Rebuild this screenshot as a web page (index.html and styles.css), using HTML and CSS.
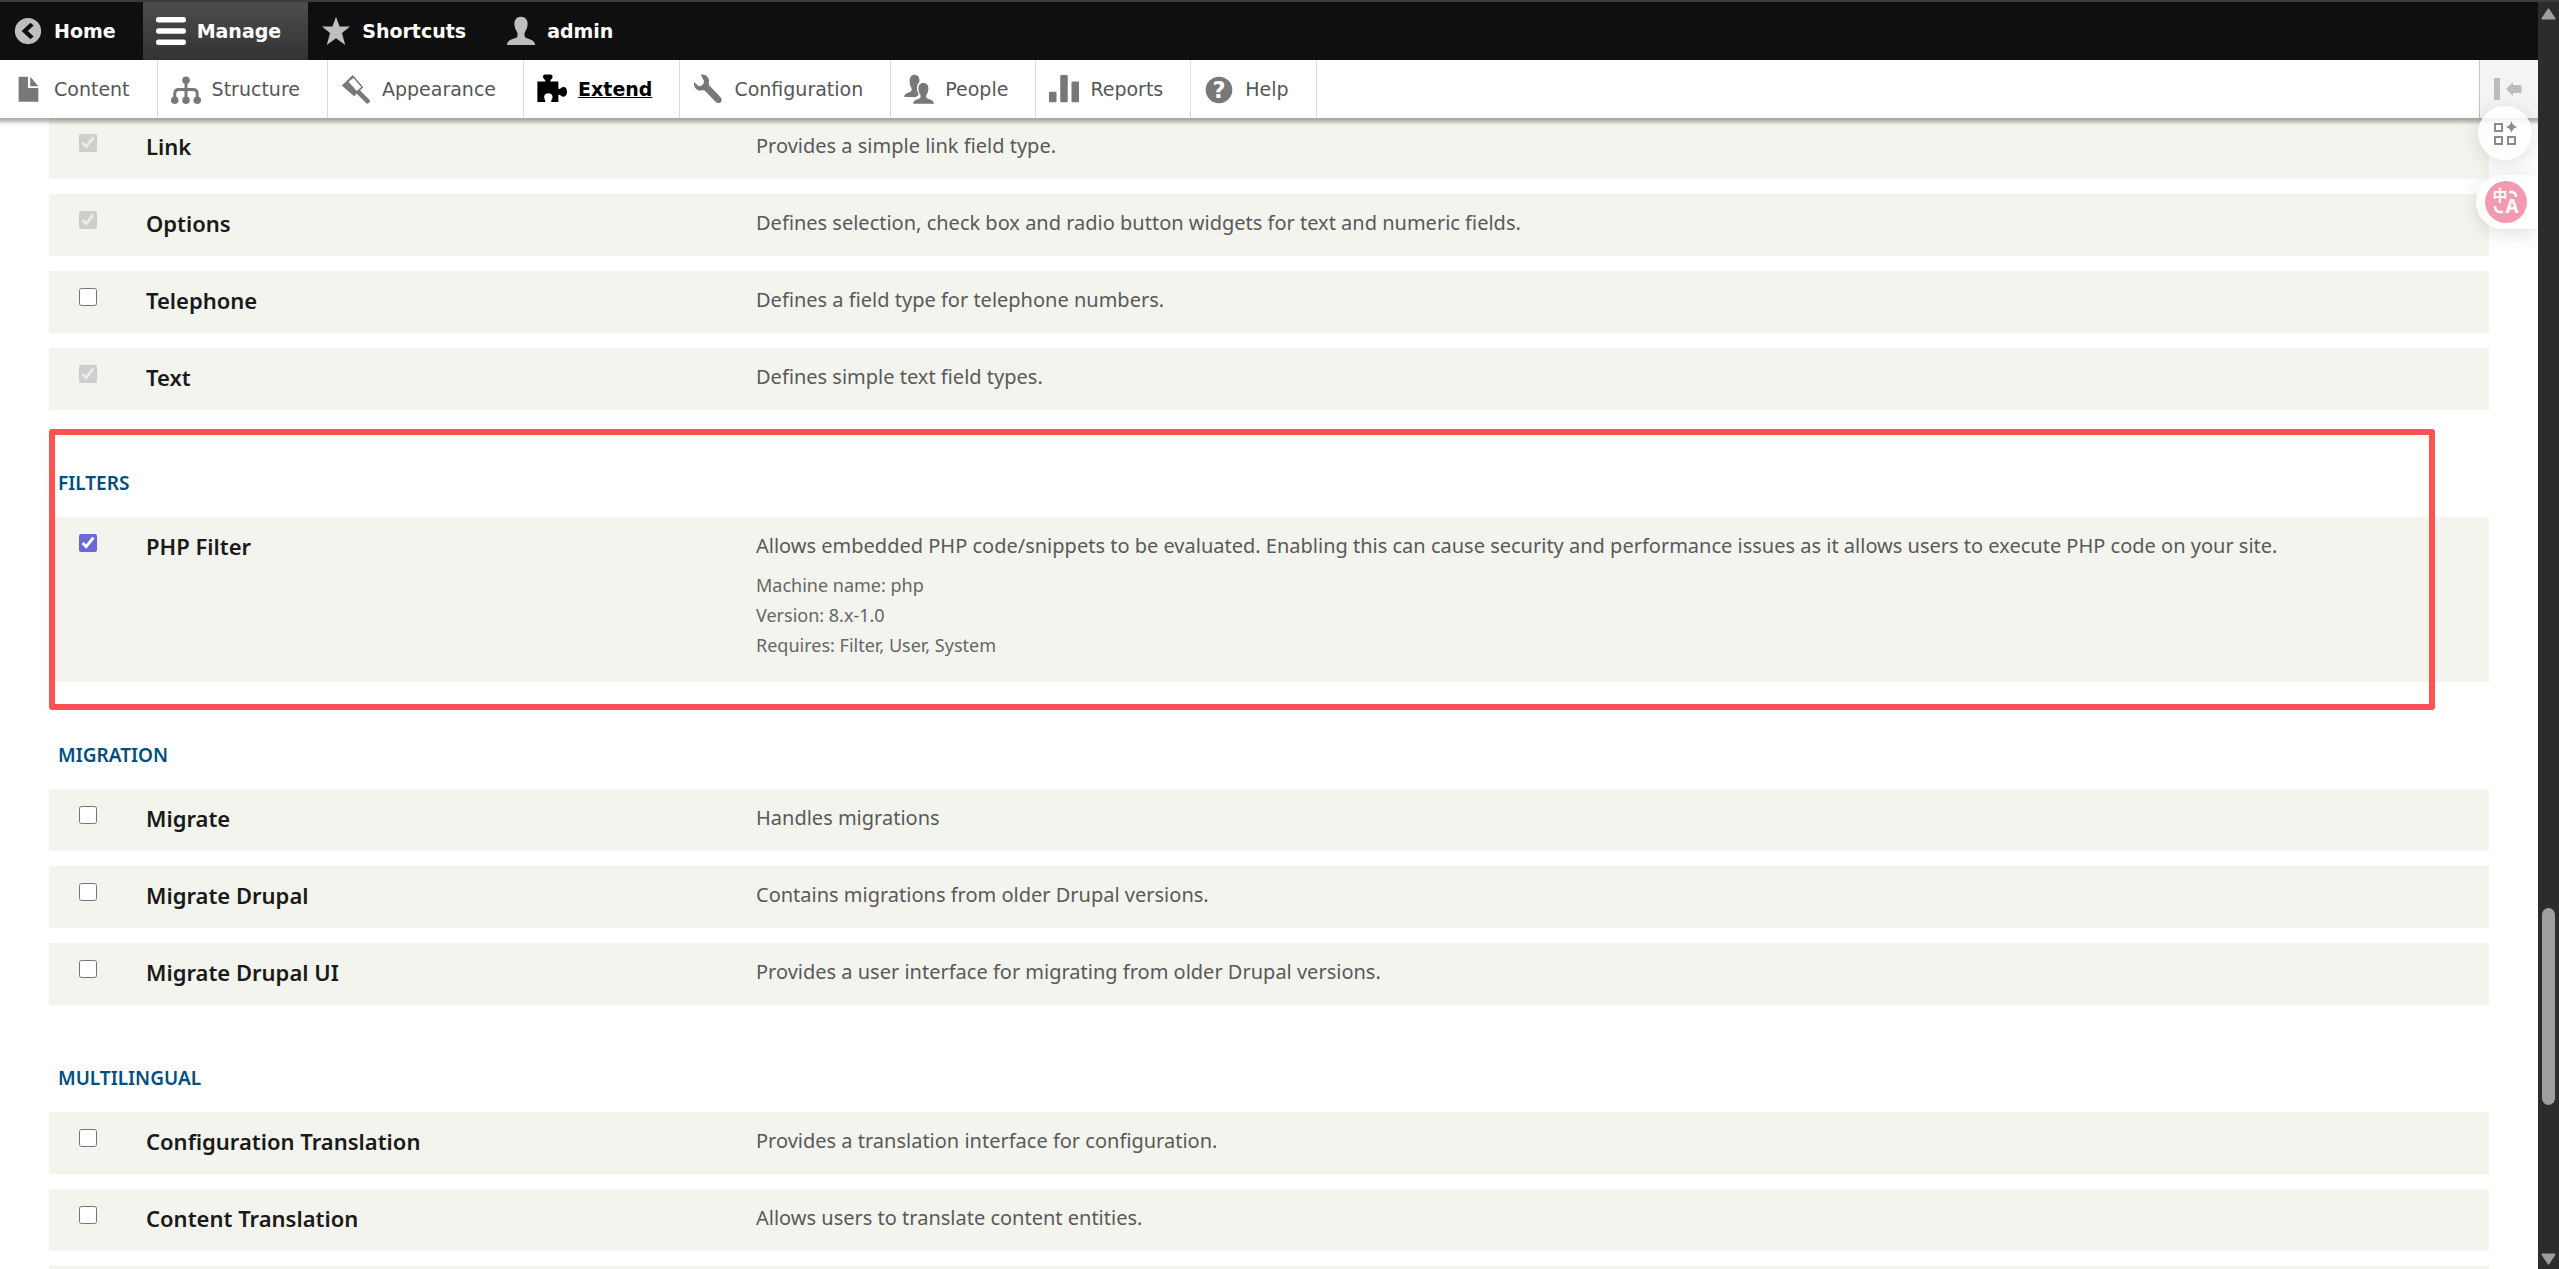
FILE: index.html
```html
<!DOCTYPE html>
<html lang="en">
<head>
  <meta charset="UTF-8">
  <meta name="viewport" content="width=device-width, initial-scale=1.0">
  <title>Extend | Drupal</title>
  <link rel="stylesheet" href="styles.css">
</head>
<body>
  <div class="page">
    <header class="toolbar">
      <nav class="bar" aria-label="Toolbar">
        <a href="#" class="tab">
          <svg class="icon" viewBox="0 0 16 16"><path fill-rule="evenodd" d="M8 1a7 7 0 1 0 0 14A7 7 0 0 0 8 1zm1.300 2.600 1.700 1.500L7.900 8l3.100 2.900-1.700 1.500L4.600 8z"/></svg>
          Home
        </a>
        <a href="#" class="tab active">
          <svg class="icon" viewBox="0 0 16 16"><rect y="0.500" width="16" height="3" rx="1.300"/><rect y="6.500" width="16" height="3" rx="1.300"/><rect y="12.500" width="16" height="3" rx="1.300"/></svg>
          Manage
        </a>
        <a href="#" class="tab">
          <svg class="icon" viewBox="0 0 16 16"><path d="M8 .4l1.900 5.200h5.600l-4.300 3.500 1.700 6.300L8 11.800l-4.900 3.600 1.700-6.300L.5 5.600h5.600z"/></svg>
          Shortcuts
        </a>
        <a href="#" class="tab">
          <svg class="icon" viewBox="0 0 16 16"><path d="M8 .4c2.300 0 3.700 1.700 3.500 4.100-.1 1.700-.6 2.800-1.300 3.800-.4.700-.5 2.200-.1 2.900.5.900 5.400 1.100 5.400 4.200H.5c0-3.100 4.900-3.300 5.400-4.200.4-.7.300-2.200-.1-2.900-.7-1-1.200-2.100-1.300-3.800C4.300 2.100 5.700.4 8 .4z"/></svg>
          admin
        </a>
      </nav>
      <nav class="tray" aria-label="Administration menu">
        <a href="#" class="item">
          <svg class="icon" viewBox="0 0 16 16"><path d="M3 1.500h5v6h5.500v7.300H3zM9.200 1.500v5h4.300z"/></svg>
          Content
        </a>
        <a href="#" class="item">
          <svg class="icon" viewBox="0 0 16 16"><circle cx="8" cy="3.300" r="2"/><circle cx="2" cy="14" r="2"/><circle cx="8" cy="14" r="2"/><circle cx="14" cy="14" r="2"/><path d="M8 3v11M2 14v-3.500Q2 8.300 4.200 8.300h7.600Q14 8.300 14 10.500V14" fill="none" stroke="currentColor" stroke-width="1.600"/></svg>
          Structure
        </a>
        <a href="#" class="item">
          <svg class="icon" viewBox="0 0 16 16"><path fill-rule="evenodd" d="M6.300.5 11.900 7 7 11.900.4 6.100zM4 4.100l4.400 5 2.400-2.200-4.200-4.800z"/><path d="M9.600 9.900l4.500 4.600" fill="none" stroke="currentColor" stroke-width="2.500" stroke-linecap="round"/></svg>
          Appearance
        </a>
        <a href="#" class="item current">
          <svg class="icon" viewBox="0 0 16 16"><path d="M.2 4H4.500C4.700 2.900 3.200 2.500 3.200 1.400 3.200.6 3.800.3 4.500.3h2.600c.7 0 1.200.4 1.200 1.100 0 1.100-1.400 1.500-1.200 2.600h4.300v3.900c1.200.4 1.300-1 2.800-1 1.100 0 1.800 1 1.800 2.600s-.7 2.600-1.800 2.600c-1.500 0-1.600-1.400-2.800-1v3.800H7.600c-.3-1 .7-1.300.7-2.600 0-1.400-.9-2.100-2.200-2.100s-2.300.7-2.300 2.100c0 1.300.9 1.600.6 2.600H.2z"/></svg>
          Extend
        </a>
        <a href="#" class="item">
          <svg class="icon" viewBox="0 0 16 16"><path d="M4.200.4c2.600-.5 4.700 1.500 4.300 4.100-.2 1.400.2 1.700 1.100 2.600l5 5.100c.9.900.9 2 .2 2.800-.8.700-1.900.7-2.800-.2L7 9.600c-.9-1-1.300-1-2.600-.8C2 9.200.1 7 .5 4.200l2.400 2.200c1.500.5 3.200-1 2.900-2.800z"/></svg>
          Configuration
        </a>
        <a href="#" class="item">
          <svg class="icon" viewBox="0 0 16 16"><path d="M5.600.4C7.200.4 8.300 1.600 8.200 3.300c0 .5-.1 1-.2 1.400-1 .8-1.300 2.200-1 3.900.1.700.5 1.500.8 2.100-.1.700-.3 1.100-1.600 1.500H.1c0-2.200 3.300-2.300 3.800-3.100.3-.5.200-1.500-.1-2-.5-.8-.7-1.700-.8-3C2.900 1.700 4 .4 5.600.4z"/><path d="M10.300 4.800c1.700 0 2.800 1.200 2.700 3-.1 1.300-.4 2.200-.9 3-.3.500-.4 1.400-.1 1.900.4.800 4 .9 4 3.200H4.900c0-2.300 3.400-2.400 3.800-3.200.3-.5.200-1.400-.1-1.900-.5-.8-.8-1.700-.9-3-.1-1.800 1-3 2.600-3z"/></svg>
          People
        </a>
        <a href="#" class="item">
          <svg class="icon" viewBox="0 0 16 16"><rect y="9.500" width="4" height="5.500" rx=".5"/><rect x="6" y=".5" width="4" height="14.500" rx=".5"/><rect x="12" y="4" width="4" height="11" rx=".5"/></svg>
          Reports
        </a>
        <a href="#" class="item">
          <svg class="icon" viewBox="0 0 16 16"><circle cx="8" cy="8.500" r="7.100"/><text class="mark" x="8" y="13" text-anchor="middle">?</text></svg>
          Help
        </a>
        <button type="button" class="orientation" aria-label="Vertical orientation">
          <svg viewBox="0 0 30 22"><path d="M0 0h6v22H0zM12 11l7-7v3h8.500v8H19v3z"/></svg>
        </button>
      </nav>
    </header>

    <main class="content">
      <table class="modules">
        <tr>
          <td class="check"><input type="checkbox" id="link" checked disabled></td>
          <td class="name"><label for="link">Link</label></td>
          <td class="desc">Provides a simple link field type.</td>
        </tr>
        <tr>
          <td class="check"><input type="checkbox" id="options" checked disabled></td>
          <td class="name"><label for="options">Options</label></td>
          <td class="desc">Defines selection, check box and radio button widgets for text and numeric fields.</td>
        </tr>
        <tr>
          <td class="check"><input type="checkbox" id="telephone"></td>
          <td class="name"><label for="telephone">Telephone</label></td>
          <td class="desc">Defines a field type for telephone numbers.</td>
        </tr>
        <tr>
          <td class="check"><input type="checkbox" id="text" checked disabled></td>
          <td class="name"><label for="text">Text</label></td>
          <td class="desc">Defines simple text field types.</td>
        </tr>
      </table>

      <details class="package marked" open>
        <summary>Filters</summary>
        <table class="modules">
          <tr>
            <td class="check"><input type="checkbox" id="php" checked></td>
            <td class="name"><label for="php">PHP Filter</label></td>
            <td class="desc">
              Allows embedded PHP code/snippets to be evaluated. Enabling this can cause security and performance issues as it allows users to execute PHP code on your site.
              <div class="requirements">
                <div>Machine name: php</div>
                <div>Version: 8.x-1.0</div>
                <div>Requires: Filter, User, System</div>
              </div>
            </td>
          </tr>
        </table>
      </details>

      <details class="package" open>
        <summary>Migration</summary>
        <table class="modules">
          <tr>
            <td class="check"><input type="checkbox" id="migrate"></td>
            <td class="name"><label for="migrate">Migrate</label></td>
            <td class="desc">Handles migrations</td>
          </tr>
          <tr>
            <td class="check"><input type="checkbox" id="migrate-drupal"></td>
            <td class="name"><label for="migrate-drupal">Migrate Drupal</label></td>
            <td class="desc">Contains migrations from older Drupal versions.</td>
          </tr>
          <tr>
            <td class="check"><input type="checkbox" id="migrate-ui"></td>
            <td class="name"><label for="migrate-ui">Migrate Drupal UI</label></td>
            <td class="desc">Provides a user interface for migrating from older Drupal versions.</td>
          </tr>
        </table>
      </details>

      <details class="package" open>
        <summary>Multilingual</summary>
        <table class="modules">
          <tr>
            <td class="check"><input type="checkbox" id="config-translation"></td>
            <td class="name"><label for="config-translation">Configuration Translation</label></td>
            <td class="desc">Provides a translation interface for configuration.</td>
          </tr>
          <tr>
            <td class="check"><input type="checkbox" id="content-translation"></td>
            <td class="name"><label for="content-translation">Content Translation</label></td>
            <td class="desc">Allows users to translate content entities.</td>
          </tr>
          <tr>
            <td class="check"></td>
            <td class="name"></td>
            <td class="desc"></td>
          </tr>
        </table>
      </details>
    </main>

    <!-- floating extension buttons -->
    <div class="floating">
      <button type="button" class="apps" aria-label="Apps">
        <svg viewBox="0 0 24 24"><path d="M2 3h7v7H2zM2 16h7v7H2zM15 16h7v7h-7z" fill="none" stroke="currentColor" stroke-width="2"/><path d="M18.500 0q.9 5.100 6 6-5.100.9-6 6-.9-5.100-6-6 5.100-.9 6-6z"/></svg>
      </button>
      <button type="button" class="translate" aria-label="Translate">
        <svg viewBox="0 0 42 42"><circle cx="21" cy="21" r="21"/><text class="zh" x="15" y="20" text-anchor="middle">中</text><text class="latin" x="27" y="32" text-anchor="middle">A</text><path d="M24 11h2q5 0 5 5M10 25q0 6 5 6h3" fill="none" stroke="#fff" stroke-width="2.500"/></svg>
      </button>
    </div>
  </div>

  <div class="scrollbar">
    <svg class="arrow" viewBox="0 0 15 12"><path d="M7.500 1.500 13.500 10.500h-12z" stroke="currentColor" stroke-width="2" stroke-linejoin="round"/></svg>
    <div class="track"><div class="thumb"></div></div>
    <svg class="arrow" viewBox="0 0 15 12"><path d="M7.500 10.500 1.500 1.500h12z" stroke="currentColor" stroke-width="2" stroke-linejoin="round"/></svg>
  </div>
</body>
</html>
```
FILE: styles.css
```css
* {
  box-sizing: border-box;
}

body {
  margin: 0;
  height: 100vh;
  overflow: hidden;
  display: flex;
  border-top: 2px solid #3c3c3c;
  background: #fff;
  font-family: "Noto Sans", "Open Sans", sans-serif;
  font-size: 20px;
  line-height: 30px;
  color: #595959;
}

svg {
  fill: currentColor;
}

.page {
  position: relative;
  flex: 1;
  min-width: 0;
  overflow: hidden;
}

/* Toolbar */
.toolbar {
  position: relative;
  z-index: 1;
  font-family: "DejaVu Sans", Verdana, sans-serif;
  font-size: 19px;
}

.bar {
  display: flex;
  height: 58px;
  background: #0f0f0f;
}

.tab,
.item {
  display: flex;
  align-items: center;
  gap: 11px;
  padding: 0 27px 0 13px;
  text-decoration: none;
}

.tab {
  color: #fff;
  font-weight: bold;
}

.icon {
  width: 30px;
  height: 30px;
}

.tab .icon {
  color: #bebebe;
}

.active {
  background: linear-gradient(#4d4d4d, #333);
}

.tab.active .icon {
  color: #fff;
}

.tray {
  display: flex;
  height: 58px;
  background: #fff;
  box-shadow: 0 0 4px 4px rgba(0, 0, 0, 0.33);
  clip-path: inset(0 0 -12px 0);
}

.item {
  border-right: 1px solid #ddd;
  color: #565656;
}

.item .icon {
  color: #787878;
}

.item.current,
.item.current .icon {
  color: #000;
}

.current {
  font-weight: bold;
  text-decoration: underline;
}

.mark {
  fill: #fff;
  font-size: 12px;
  font-weight: bold;
}

.orientation {
  width: 59px;
  margin-left: auto;
  padding: 0 0 0 14px;
  display: flex;
  align-items: center;
  border: 0;
  border-left: 1px solid #c4c4c4;
  background: #f4f4f4;
  color: #bcbcbc;
}

.orientation svg {
  width: 30px;
  height: 22px;
}

/* Module list */
.content {
  margin-top: -16px;
  padding: 0 49px;
}

.modules {
  width: 100%;
  border-spacing: 0 15px;
  table-layout: fixed;
}

.modules td {
  height: 62px;
  padding: 14px 0 0;
  background: #f3f4ee;
  vertical-align: top;
}

.modules .check {
  width: 97px;
  padding: 17px 0 0 30px;
  line-height: 0;
}

.check input {
  width: 18px;
  height: 18px;
  margin: 0;
  accent-color: #6b69d6;
}

.name {
  width: 25%;
  font-size: 22px;
  font-weight: 600;
  color: #1a1a1a;
}

.requirements {
  margin: 9px 0 22px;
  font-size: 18px;
  color: #666;
}

.package {
  position: relative;
}

.package summary {
  padding: 43px 9px 4px;
  list-style: none;
  text-transform: uppercase;
  font-size: 19px;
  font-weight: 600;
  color: #004f80;
}

/* Red frame around the package to look at */
.marked::after {
  content: "";
  position: absolute;
  top: 4px;
  right: 54px;
  bottom: -13px;
  left: 0;
  border: 6px solid #fc5252;
  border-radius: 3px;
  pointer-events: none;
}

/* Floating buttons */
.floating {
  position: absolute;
  z-index: 2;
  top: 104px;
  right: 0;
  display: flex;
  flex-direction: column;
  align-items: flex-end;
  gap: 15px;
}

.floating button {
  height: 54px;
  padding: 0;
  display: flex;
  align-items: center;
  border: 0;
  background: rgba(255, 255, 255, 0.85);
  box-shadow: 0 4px 20px rgba(0, 0, 0, 0.13);
}

.floating .apps {
  width: 54px;
  margin-right: 6px;
  justify-content: center;
  border-radius: 50%;
  color: #8c8c8c;
}

.apps svg {
  width: 24px;
  height: 24px;
  overflow: visible;
}

.floating .translate {
  width: 62px;
  padding-left: 9px;
  border-radius: 27px 0 0 27px;
  color: #f49ab0;
}

.translate svg {
  width: 42px;
  height: 42px;
}

.translate text {
  fill: #fff;
  font-weight: bold;
}

.zh {
  font-family: "Noto Sans CJK SC", sans-serif;
  font-size: 15px;
}

.latin {
  font-family: "Noto Sans", sans-serif;
  font-size: 19px;
}

/* Scrollbar */
.scrollbar {
  width: 21px;
  padding: 6px 0 4px;
  display: flex;
  flex-direction: column;
  align-items: center;
  background: #2c2c2c;
  color: #9f9f9f;
}

.arrow {
  width: 15px;
  height: 12px;
}

.track {
  flex: 1;
  width: 13px;
  display: grid;
  grid-template-rows: 72fr 16fr 12fr;
}

.thumb {
  grid-row: 2;
  border-radius: 7px;
  background: #9f9f9f;
}
```
